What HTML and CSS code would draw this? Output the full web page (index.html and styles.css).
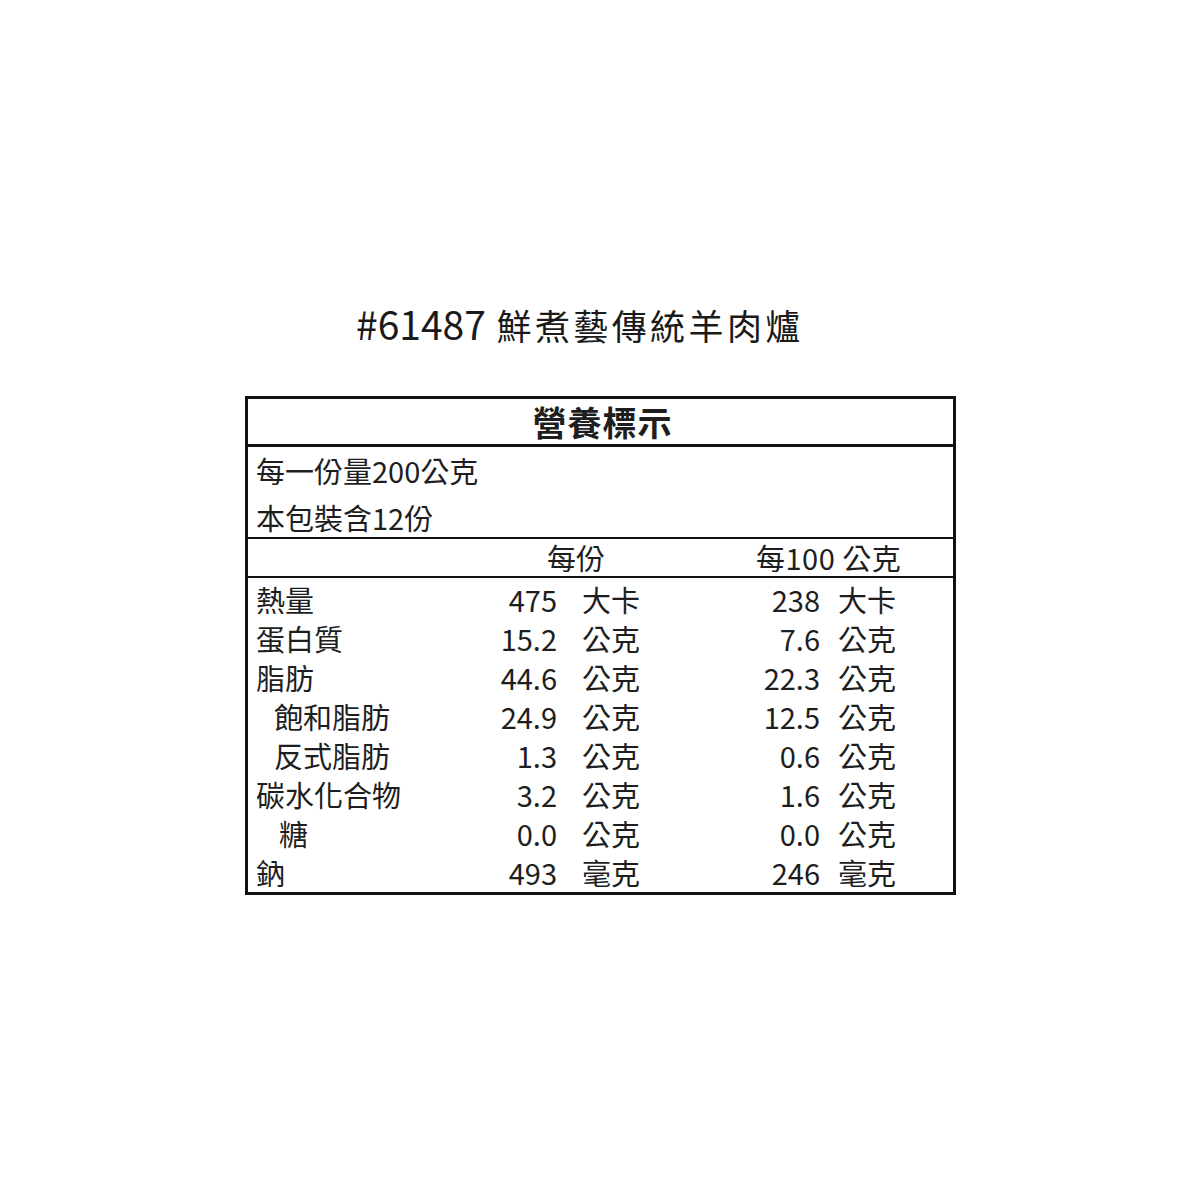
FILE: index.html
```html
<!DOCTYPE html>
<html lang="zh-Hant">
<head>
<meta charset="utf-8">
<title>#61487 鮮煮藝傳統羊肉爐</title>
<link rel="stylesheet" href="styles.css">
</head>
<body>
<main class="page">
  <h1 class="product-title"><span class="code">#61487</span> <span class="pname">鮮煮藝傳統羊肉爐</span></h1>
  <section class="label">
    <div class="label-head">營養標示</div>
    <div class="serving">
      <div class="serving-line first">每一份量200公克</div>
      <div class="serving-line second">本包裝含12份</div>
    </div>
    <div class="col-head">
      <span class="ch-a">每份</span>
      <span class="ch-b">每100 公克</span>
    </div>
    <div class="facts">
      <div class="row"><span class="name">熱量</span><span class="n1">475</span><span class="u1">大卡</span><span class="n2">238</span><span class="u2">大卡</span></div>
      <div class="row"><span class="name">蛋白質</span><span class="n1">15.2</span><span class="u1">公克</span><span class="n2">7.6</span><span class="u2">公克</span></div>
      <div class="row"><span class="name">脂肪</span><span class="n1">44.6</span><span class="u1">公克</span><span class="n2">22.3</span><span class="u2">公克</span></div>
      <div class="row"><span class="name sub">飽和脂肪</span><span class="n1">24.9</span><span class="u1">公克</span><span class="n2">12.5</span><span class="u2">公克</span></div>
      <div class="row"><span class="name sub">反式脂肪</span><span class="n1">1.3</span><span class="u1">公克</span><span class="n2">0.6</span><span class="u2">公克</span></div>
      <div class="row"><span class="name">碳水化合物</span><span class="n1">3.2</span><span class="u1">公克</span><span class="n2">1.6</span><span class="u2">公克</span></div>
      <div class="row"><span class="name sub2">糖</span><span class="n1">0.0</span><span class="u1">公克</span><span class="n2">0.0</span><span class="u2">公克</span></div>
      <div class="row"><span class="name">鈉</span><span class="n1">493</span><span class="u1">毫克</span><span class="n2">246</span><span class="u2">毫克</span></div>
    </div>
  </section>
</main>
</body>
</html>
```
FILE: styles.css
```css
html, body {
  margin: 0;
  padding: 0;
  background: #ffffff;
}
body {
  width: 1200px;
  height: 1200px;
  font-family: "Noto Sans CJK TC", "Noto Sans", sans-serif;
  color: #1e1e1e;
}
.page {
  padding-top: 302px;
  padding-left: 245px;
}
.product-title {
  margin: 0;
  padding-left: 111px;
  font-size: 34px;
  font-weight: 400;
  line-height: 42px;
  height: 42px;
  color: #1a1a1a;
  white-space: nowrap;
}
.product-title .code {
  font-size: 39px;
  letter-spacing: 0;
}
.product-title .pname {
  font-size: 35px;
  letter-spacing: 3.4px;
  margin-left: 3px;
}
.label {
  margin-top: 52px;
  width: 705px;
  border: 3px solid #111;
}
.label-head {
  height: 45px;
  line-height: 45px;
  text-align: center;
  font-size: 34px;
  font-weight: 700;
  border-bottom: 3px solid #111;
  padding-left: 4px;
  letter-spacing: 1px;
}
.serving {
  height: 90px;
  border-bottom: 2px solid #111;
  padding-left: 8px;
  font-size: 29px;
}
.serving-line.first {
  height: 46px;
  line-height: 46px;
}
.serving-line.second {
  height: 44px;
  line-height: 48px;
}
.col-head {
  display: grid;
  grid-template-columns: 299px 209px 1fr;
  height: 37px;
  line-height: 37px;
  font-size: 29px;
  border-bottom: 2px solid #111;
}
.ch-a { grid-column: 2; }
.ch-b { grid-column: 3; letter-spacing: 0.5px; }
.facts {
  padding-top: 2px;
  padding-left: 8px;
  font-size: 29px;
}
.row {
  display: grid;
  grid-template-columns: 220px 81px 163px 100px 1fr;
  height: 39px;
  line-height: 39px;
}
.name.sub { padding-left: 18px; }
.name.sub2 { padding-left: 23px; }
.n1, .n2 { text-align: right; }
.u1 { padding-left: 25px; }
.u2 { padding-left: 18px; }
```
